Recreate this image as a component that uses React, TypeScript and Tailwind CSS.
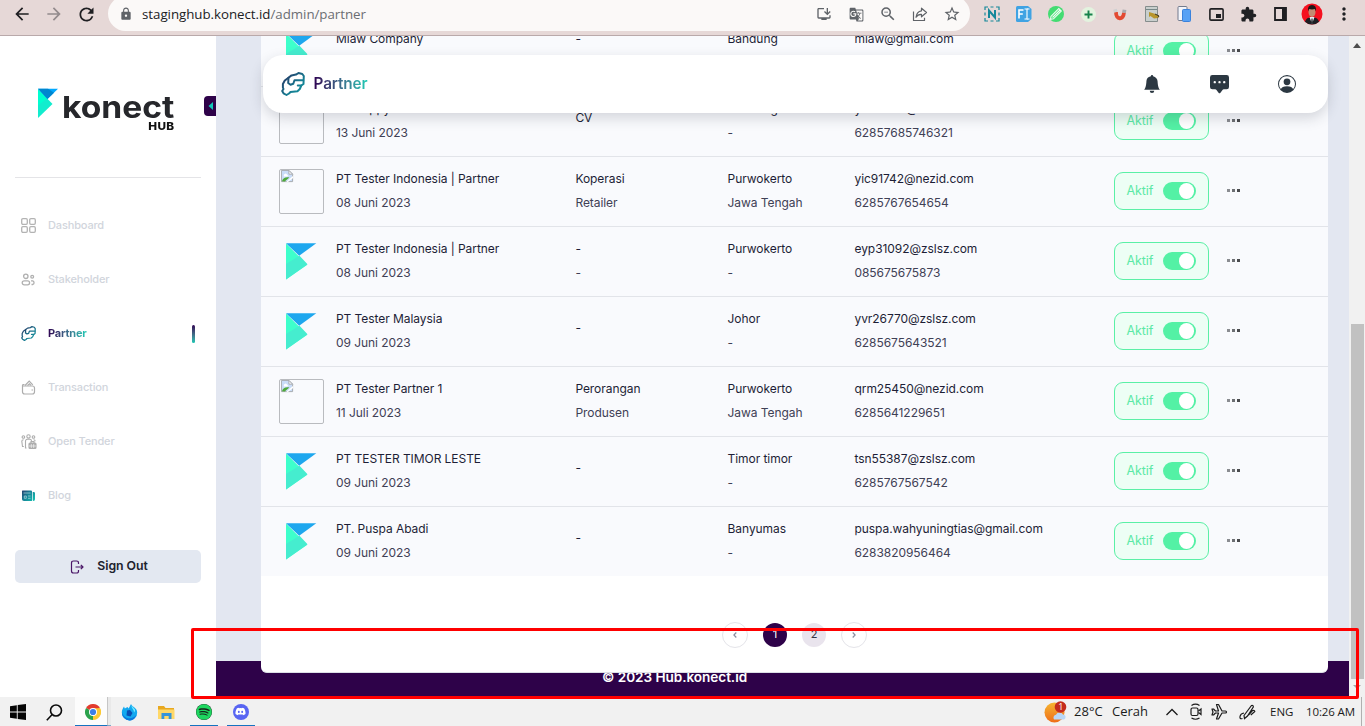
import React from "react";
import { BsBellFill, BsChatSquareDotsFill, BsPersonCircle } from "react-icons/bs";
import { FaDiscord, FaSpotify } from "react-icons/fa";
import {
  MdArrowBack, MdArrowForward, MdExtension, MdGTranslate, MdLock, MdMoreVert,
  MdOutlineInstallDesktop, MdRefresh, MdStarBorder, MdOutlineZoomOut,
} from "react-icons/md";

type Row = {
  broken?: boolean;
  name: string;
  date: string;
  kind: string[];
  place: string[];
  mail: string;
  phone: string;
};

const rows: Row[] = [
  { name: "Miaw Company", date: "13 Juni 2023", kind: ["-", "-"], place: ["Bandung", "-"], mail: "miaw@gmail.com", phone: "628576857463" },
  { broken: true, name: "PT Puppy Indah", date: "13 Juni 2023", kind: ["CV"], place: ["Bandung", "-"], mail: "yosabara@nezid.com", phone: "62857685746321" },
  { broken: true, name: "PT Tester Indonesia | Partner", date: "08 Juni 2023", kind: ["Koperasi", "Retailer"], place: ["Purwokerto", "Jawa Tengah"], mail: "yic91742@nezid.com", phone: "6285767654654" },
  { name: "PT Tester Indonesia | Partner", date: "08 Juni 2023", kind: ["-", "-"], place: ["Purwokerto", "-"], mail: "eyp31092@zslsz.com", phone: "085675675873" },
  { name: "PT Tester Malaysia", date: "09 Juni 2023", kind: ["-"], place: ["Johor", "-"], mail: "yvr26770@zslsz.com", phone: "6285675643521" },
  { broken: true, name: "PT Tester Partner 1", date: "11 Juli 2023", kind: ["Perorangan", "Produsen"], place: ["Purwokerto", "Jawa Tengah"], mail: "qrm25450@nezid.com", phone: "6285641229651" },
  { name: "PT TESTER TIMOR LESTE", date: "09 Juni 2023", kind: ["-"], place: ["Timor timor", "-"], mail: "tsn55387@zslsz.com", phone: "6285767567542" },
  { name: "PT. Puspa Abadi", date: "09 Juni 2023", kind: ["-"], place: ["Banyumas", "-"], mail: "puspa.wahyuningtias@gmail.com", phone: "6283820956464" },
];

function KMark() {
  return (
    <svg width="45" height="45" viewBox="0 0 45 45">
      <path d="M7 4.500v36l21.300-14.700z" fill="#3effcb" />
      <path d="M7 25 20.500 16.700l8 8.600L7 40.500z" fill="#45edcf" />
      <path d="M7 4.200h30.300L20.200 16.800z" fill="#1ea7ee" />
    </svg>
  );
}

function BrokenImage() {
  return (
    <div className="h-[45px] w-[45px] rounded-[2px] border border-[#b9bbbf]">
      <svg width="13" height="13" viewBox="0 0 14 14" className="ml-px">
        <path d="M.5.5h8l4 4v8H.5z" fill="#c9dcf8" stroke="#a4a7ac" />
        <path d="M8.500.5v4h4z" fill="#fff" stroke="#a4a7ac" />
        <path d="M3 5.500a1.800 1.800 0 0 1 3.400-.6A1.300 1.300 0 0 1 7 7H3z" fill="#fff" />
        <path d="M1 12c1-3 4-5 8-4l-5 4.500z" fill="#4fa93a" />
        <path d="M12.800 6.500 5.500 13h2L13 8.500z" fill="#fff" />
      </svg>
    </div>
  );
}

function Lines({ items, width }: { items: string[]; width: string }) {
  return (
    <div className={`flex h-12 flex-col justify-center leading-6 ${items.length === 1 ? "pb-[5px]" : ""} ${width}`}>
      {items.map((t, i) => (
        <span key={i} className={i === 0 ? "text-[#1d1e36]" : "text-[#3f4055]"}>{t}</span>
      ))}
    </div>
  );
}

function PartnerRow({ row, last }: { row: Row; last: boolean }) {
  return (
    <div className={`flex shrink-0 items-start bg-[#f9fafd] pl-[18px] text-[12px] tracking-[-0.060px] whitespace-nowrap ${last ? "h-[69px]" : "h-[70px] border-b border-[#e2e4e9]"}`}>
      <div className="mt-3 mr-3 h-[45px] w-[45px]">{row.broken ? <BrokenImage /> : <KMark />}</div>
      <div className="flex pt-[9.500px]">
        <Lines items={[row.name, row.date]} width="w-[239.400px]" />
        <Lines items={row.kind} width="w-[152.200px]" />
        <Lines items={row.place} width="w-[126.900px]" />
        <Lines items={[row.mail, row.phone]} width="w-[259.500px]" />
      </div>
      <div className="mt-[15px] flex h-[38px] w-[95px] items-center rounded-[9px] border border-[#5af0a6] bg-[#edfef5] pl-[11.500px]">
        <span className="w-[36.500px] text-[12.500px] text-[#5be9a6]">Aktif</span>
        <span className="flex h-[18px] w-[33px] items-center justify-end rounded-full bg-[#54f1a5] pr-[1.500px]">
          <span className="h-[15.500px] w-[15.500px] rounded-full bg-white" />
        </span>
      </div>
      <div className="mt-8 ml-[18px] flex gap-[2px]">
        <span className="h-[3px] w-[3px] bg-[#8a8c91]" />
        <span className="h-[3px] w-[3px] bg-[#6c6e72]" />
        <span className="h-[3px] w-[3px] bg-[#4a4b4e]" />
      </div>
    </div>
  );
}

function PartnerIcon({ size }: { size: number }) {
  const id = `partner-${size}`;
  return (
    <svg width={size} height={size} viewBox="0 0 24 24" fill="none" stroke={`url(#${id})`} strokeWidth="2" strokeLinejoin="round" strokeLinecap="round">
      <defs>
        <linearGradient id={id} x1="0" y1="0" x2="24" y2="24" gradientUnits="userSpaceOnUse">
          <stop stopColor="#2a2358" />
          <stop offset=".6" stopColor="#167c92" />
          <stop offset="1" stopColor="#129ba0" />
        </linearGradient>
      </defs>
      <path d="M7.500 5.700 3.800 8.500 1.900 12v3.500L2.500 17 1.200 19l1.300 2.300L5.500 23 8 21.500 9.500 20l7-.8 2.300-2.200 1.500-3.500L22.500 12l.3-8-1.500-2L17.500 1 15 2.600l-4.500.8z" />
      <path d="M7.500 5.700 7.200 11l2.300 1.700 2.800-1 1.200-3.500h8.700M20.300 13.500h-3.500" />
    </svg>
  );
}

function GridIcon() {
  return (
    <svg width="15" height="15" viewBox="0 0 15 15" fill="none" stroke="#b3b3b3" strokeWidth="1.300">
      <rect x=".7" y=".7" width="5.600" height="5.600" rx="1.200" />
      <rect x="8.700" y=".7" width="5.600" height="5.600" rx="1.200" />
      <rect x=".7" y="8.700" width="5.600" height="5.600" rx="1.200" />
      <rect x="8.700" y="8.700" width="5.600" height="5.600" rx="1.200" />
    </svg>
  );
}

function PeopleIcon() {
  return (
    <svg width="15" height="15" viewBox="0 0 15 15" fill="none" stroke="#b0b0b0" strokeWidth="1.300">
      <circle cx="4.800" cy="4.300" r="2.200" />
      <circle cx="11.200" cy="4.800" r="1.400" />
      <rect x="1.200" y="8.800" width="7.400" height="4" rx="2" />
      <path d="M10 8.800h1.800a2 2 0 0 1 0 3.700H10.500" />
    </svg>
  );
}

function WalletIcon() {
  return (
    <svg width="15" height="15" viewBox="0 0 15 15" fill="none" stroke="#adadad" strokeWidth="1.200">
      <path d="M1.500 5.500v6.300a2.200 2.200 0 0 0 2.200 2.200h7.600a2.200 2.200 0 0 0 2.200-2.200V8a2 2 0 0 0-2-2H2.500C1 6 1.300 4.500 2.500 4.500h1" />
      <path d="m4 5.500 4.200-4.300 3.600 3.600M6.500 5.500 8.500 3.800l1.500 1.500M10.500 10h1.500" />
    </svg>
  );
}

function TenderIcon() {
  return (
    <svg width="16" height="16" viewBox="0 0 16 16" fill="none" stroke="#adadad" strokeWidth="1.100">
      <circle cx="7.500" cy="2.400" r="1.700" />
      <circle cx="2.400" cy="3" r="1.300" />
      <circle cx="12.500" cy="3" r="1.300" />
      <path d="M5.500 14h-1V7a1.700 1.700 0 0 1 1.700-1.700h2.600A1.700 1.700 0 0 1 10.500 7M2.800 12.500H1.500L.8 7.300Q.8 5.800 2.600 5.800M12.500 5.800q1.700 0 1.700 1.500" />
      <rect x="8" y="9" width="7" height="5.500" rx="1" fill="#adadad" />
      <path d="M10 9V7.500h3V9" />
      <path d="M8 12h7M10.300 10v4M12.700 10v4" stroke="#fff" strokeWidth=".6" />
    </svg>
  );
}

function BlogIcon() {
  return (
    <svg width="15" height="15" viewBox="0 0 15 15">
      <defs>
        <linearGradient id="blog" x1="0" y1="0" x2="14" y2="12" gradientUnits="userSpaceOnUse">
          <stop stopColor="#2b2a62" /><stop offset=".5" stopColor="#177f95" /><stop offset="1" stopColor="#16c2b2" />
        </linearGradient>
      </defs>
      <path d="M1.500 2.500H10q1 0 1 1v9.500H3q-2 0-2-1.800V3q0-.5.500-.5zM11.700 4h1q1.300 0 1.300 1.300v6q0 1.700-1.500 1.700-.8 0-.8-1z" fill="url(#blog)" />
      <path d="M2.500 5h7M7 8h2.500M7 10.300h2.500M3.300 8h2v2.300h-2z" stroke="#b5dbe2" strokeWidth=".7" fill="none" />
    </svg>
  );
}

const gradientText = "bg-gradient-to-r from-[#2e0052] via-[#3a6c8b] to-[#14cdb5] bg-clip-text text-transparent";

function Sidebar() {
  const items = [
    { label: "Dashboard", icon: <GridIcon /> },
    { label: "Stakeholder", icon: <PeopleIcon /> },
    { label: "Partner", icon: <PartnerIcon size={15} />, active: true },
    { label: "Transaction", icon: <WalletIcon /> },
    { label: "Open Tender", icon: <TenderIcon /> },
    { label: "Blog", icon: <BlogIcon /> },
  ];
  return (
    <aside className="relative flex w-[216px] shrink-0 flex-col bg-white px-[15px] pt-[52px]">
      <div className="flex h-[90px] pl-[22px]">
        <svg width="22" height="30" viewBox="0 0 22 30">
          <path d="M1 1v29l14.500-14z" fill="#12edce" />
          <path d="M1 1v16.500l9.500-7.500z" fill="#00ffd0" />
          <path d="M1 .7h20L10.500 11z" fill="#00a8ff" />
          <path d="M1 .7h10l6 4L10.500 11z" fill="#0086cf" />
        </svg>
        <div className="flex w-[115.500px] flex-col items-end pt-[4px] pl-[3px] leading-none">
          <span className="origin-right scale-x-[1.120] text-[30px] leading-[30px] font-bold text-[#26272b]">konect</span>
          <span className="-mt-px origin-right scale-x-[1.070] text-[11px] leading-[11px] font-extrabold tracking-[0.300px] text-[#111]">HUB</span>
        </div>
      </div>
      <div className="absolute top-[60px] right-0 flex h-5 w-3 items-center justify-center rounded-l-[4px] bg-[#2e0249]">
        <svg width="5" height="8" viewBox="0 0 5 8"><path d="M5 0v8L.5 4z" fill="#12c8b8" /></svg>
      </div>
      <div className="mt-[-1px] h-px w-[186px] bg-[#e4e4e7]" />
      <nav className="mt-[21px] flex flex-col">
        {items.map((it) => (
          <div key={it.label} className="flex h-[54px] items-center pl-[6px]">
            <span className="-mt-px flex w-[27px]">{it.icon}</span>
            <span className={`-mt-[2px] text-[11px] ${it.active ? "font-bold tracking-[-0.200px] " + gradientText : "font-medium tracking-[-0.150px] text-[#d1d5dc]"}`}>{it.label}</span>
            {it.active && <span className="mr-[6px] ml-auto h-[18px] w-[3px] rounded-full bg-gradient-to-b from-[#2e0052] to-[#12c8b4]" />}
          </div>
        ))}
      </nav>
      <button className="mt-[27px] flex h-[33px] w-[186px] items-center justify-center gap-[13px] rounded-[5px] bg-[#e3e8f1] pl-[2px] text-[12.300px] font-semibold tracking-[-0.050px] text-[#20222e]">
        <svg width="14" height="14" viewBox="0 0 14 14" fill="none" stroke="#4b1768" strokeWidth="1.200" strokeLinejoin="round">
          <path d="M8.500 4V2.800Q8.500 1 6.500 1h-3q-2 0-2 2v8q0 2 2 2h3q2 0 2-1.800V10M5.500 7h7M10.800 4.800 13 7l-2.200 2.200" />
        </svg>
        Sign Out
      </button>
    </aside>
  );
}

function Pagination() {
  const arrow = "flex h-[26px] w-[26px] items-center justify-center rounded-full border border-[#e4e4e9]";
  const page = "flex h-6 w-6 items-center justify-center rounded-full pb-[2px] text-[11px]";
  return (
    <div className="mt-[46px] flex items-center justify-center gap-[15px]">
      <span className={arrow}><svg width="4" height="6" viewBox="0 0 4 6" fill="none" stroke="#8b8da0" strokeWidth="1.200"><path d="M3.300.5.900 3l2.400 2.500" /></svg></span>
      <span className={`${page} bg-[#2e0249] text-white`}>1</span>
      <span className={`${page} bg-[#e9e4ed] text-[#343545]`}>2</span>
      <span className={arrow}><svg width="4" height="6" viewBox="0 0 4 6" fill="none" stroke="#8b8da0" strokeWidth="1.200"><path d="M.7.5 3.100 3 .7 5.500" /></svg></span>
    </div>
  );
}

function Cell({ children }: { children: React.ReactNode }) {
  return <span className="flex h-full w-8 shrink-0 items-center justify-center">{children}</span>;
}

function BrowserBar() {
  return (
    <header className="flex h-9 shrink-0 items-start overflow-hidden border-b border-[#b9a9aa] bg-[#e6d8d7] text-[#5f6368]">
      <div className="flex h-7 w-[108px] shrink-0 items-center pl-[6px] text-[#1f1f22]">
        <Cell><MdArrowBack size={20} /></Cell>
        <Cell><MdArrowForward size={20} className="text-[#938b8d]" /></Cell>
        <Cell><MdRefresh size={21} /></Cell>
      </div>
      <div className="-mt-1 flex h-[35px] w-[862px] shrink-0 items-center rounded-full bg-[#fbf9f8] pt-px pl-[11px]">
        <MdLock size={14} className="mr-[9px]" />
        <span className="pt-[2px] font-['Open_Sans',sans-serif] text-[13.300px] tracking-[-0.030px] text-[#202124]">
          staginghub.konect.id<span className="text-[#6b6e73]">/admin/partner</span>
        </span>
        <span className="mr-[2px] ml-auto flex h-full">
          <Cell><MdOutlineInstallDesktop size={16} /></Cell>
          <Cell><MdGTranslate size={15} /></Cell>
          <Cell><MdOutlineZoomOut size={18} /></Cell>
          <Cell>
            <svg width="16" height="15" viewBox="0 0 16 15" fill="none" stroke="#5f6368" strokeWidth="1.200" strokeLinejoin="round">
              <path d="M1.500 4.500v9h11v-2.700M9.500 1.200l5 4.300-5 4.300V7.300Q6 7 4 10.300 4.600 4.500 9.500 3.800z" />
            </svg>
          </Cell>
          <Cell><MdStarBorder size={18} /></Cell>
        </span>
      </div>
      <div className="ml-[6px] flex h-7 text-[#202124]">
        <Cell>
          <svg width="16" height="16" viewBox="0 0 16 16" fill="none" stroke="#15889a" strokeWidth="1.500">
            <path d="M1 4V1h3M12 1h3v3M15 12v3h-3M4 15H1v-3M1 6.500v3M15 6.500v3M6.500 1h3M6.500 15h3" strokeWidth="1.200" />
            <path d="M5 12V4.500l6 7V4" strokeWidth="2" />
          </svg>
        </Cell>
        <Cell>
          <svg width="16" height="16" viewBox="0 0 16 16" fill="none" stroke="#fff">
            <path d="M1.500 0H12l3.500 3v10L12 16H1.500Q0 16 0 14.500v-13Q0 0 1.500 0z" fill="#40a3e3" stroke="none" />
            <path d="M3 12.500V4h4.500M3 8h3.800" strokeWidth="1.600" /><path d="M8.500 3h2l1-.3 1 .3h1M8.500 13h2l1 .3 1-.3h1M11 3v10" strokeWidth="1.100" />
          </svg>
        </Cell>
        <Cell>
          <svg width="16" height="16" viewBox="0 0 16 16"><circle cx="8" cy="8" r="8" fill="#44dc72" /><path d="m3 10.300 7.800-7.800 2.500 2.500-7.800 7.800-3 .6zM4.500 11.500l7.500-7.500" fill="none" stroke="#eefdf2" strokeWidth="1.100" /></svg>
        </Cell>
        <Cell>
          <svg width="15" height="15" viewBox="0 0 15 15"><circle cx="7.500" cy="7.500" r="7.500" fill="#e3f3df" /><path d="M7.500 3.500v8M3.500 7.500h8" stroke="#15824b" strokeWidth="1.900" /></svg>
        </Cell>
        <Cell>
          <svg width="14" height="14" viewBox="0 0 14 14" fill="none" strokeWidth="3.800"><path d="M3 5C2.800 13 10.500 13.500 11 5.500" stroke="#e34a32" /><path d="m2 2.300.8 2.900" stroke="#cfd0d2" /><path d="m11.500 2.700-.5 3" stroke="#a8aaae" /></svg>
        </Cell>
        <Cell>
          <svg width="16" height="16" viewBox="0 0 16 16"><path d="M1.500.5h12v15h-12z" fill="#c9cfcd" stroke="#858d8c" /><path d="M2 3.500h11" stroke="#788" /><path d="m5 6 5 1.500 5 2-1 2.500-4 .5L6.500 10 5 11z" fill="#b8952c" /><path d="m11 8 4 2-1 1.500" stroke="#3c3522" fill="none" /></svg>
        </Cell>
        <Cell>
          <svg width="14" height="16" viewBox="0 0 14 16"><rect x="1" y=".5" width="9" height="14" rx="1" fill="#f3f5fb" stroke="#727b8e" /><rect x="5.500" y="3.500" width="8" height="12" rx="1" fill="#57a1f5" stroke="#3a82dc" /></svg>
        </Cell>
        <Cell>
          <svg width="15" height="13" viewBox="0 0 15 13"><rect x=".9" y=".9" width="13.200" height="11.200" rx="1.200" fill="none" stroke="#1f1f22" strokeWidth="1.600" /><path d="M7 6h5v4H7z" fill="#1f1f22" /></svg>
        </Cell>
        <Cell><MdExtension size={17} /></Cell>
        <Cell>
          <svg width="13" height="14" viewBox="0 0 13 14"><path d="M1 1h11v12H1z" fill="none" stroke="#1f1f22" strokeWidth="1.800" /><path d="M8 1h4v12H8z" fill="#1f1f22" /></svg>
        </Cell>
        <Cell>
          <svg width="22" height="22" viewBox="0 0 22 22">
            <defs><clipPath id="avatar"><circle cx="11" cy="11" r="10.500" /></clipPath></defs>
            <g clipPath="url(#avatar)">
              <path d="M0 0h22v22H0z" fill="#f5101f" />
              <path d="M3.500 22q0-6.500 5-7.500h5q5 1 5 7.500z" fill="#1d1f24" />
              <path d="m8.500 14 2.500 7 2.500-7z" fill="#e9edf0" />
              <path d="m10.500 15.500-.5 5h2l-.5-5z" fill="#22252a" />
              <ellipse cx="11" cy="9" rx="3.500" ry="5" fill="#c48c72" />
              <path d="M7.200 8.500Q6 2 11 2t3.800 6.500l-.8-2.500q-3 .8-6 0z" fill="#1b1617" />
            </g>
          </svg>
        </Cell>
        <Cell><MdMoreVert size={20} /></Cell>
      </div>
    </header>
  );
}

function TaskIcon({ width, open, children }: { width: string; open?: boolean; children: React.ReactNode }) {
  return (
    <span className={`flex h-full shrink-0 items-center justify-center ${width}`}>
      <span className={`flex h-full w-[28px] items-center justify-center pt-px ${open ? "border-b border-[#1673c0]" : ""}`}>{children}</span>
    </span>
  );
}

function Taskbar() {
  return (
    <footer className="flex h-[29px] shrink-0 items-center bg-[#f1f1f1] font-['Open_Sans',sans-serif] text-[#1b1b1b]">
      <TaskIcon width="w-[36px]">
        <svg width="16" height="16" viewBox="0 0 16 16"><path d="M0 2.200 6.800 1.300V7.500H0zM7.700 1.100 16 0v7.500H7.700zM0 8.500h6.800v6.300L0 13.800zM7.700 8.500H16V16l-8.300-1.100z" fill="#050505" /></svg>
      </TaskIcon>
      <TaskIcon width="w-[36px]">
        <svg width="17" height="17" viewBox="0 0 17 17" fill="none" stroke="#0a0a0a" strokeWidth="1.600"><circle cx="10" cy="6.500" r="5.500" /><path d="m6.200 10.500-5.400 5.700" /></svg>
      </TaskIcon>
      <span className="ml-[3px] flex h-full w-[33px] items-center justify-center border-r border-b border-r-[#c6c6c6] border-b-[#1673c0] bg-[#fcfcfc] pt-px pl-1">
        <svg width="16" height="16" viewBox="0 0 16 16">
          <path d="M8 8 1.070 4A8 8 0 0 1 14.930 4z" fill="#e33b2e" />
          <path d="M8 8 8 16A8 8 0 0 1 1.070 4z" fill="#2ba24c" />
          <path d="M8 8h-.1L14.930 4A8 8 0 0 1 8 16z" fill="#fcc934" />
          <path d="M8 4.200h7a8 8 0 0 1-.4 8L8 12z" fill="#fcc934" />
          <circle cx="8" cy="8" r="4" fill="#fff" /><circle cx="8" cy="8" r="3.100" fill="#3b7fe8" />
        </svg>
      </span>
      <span className="h-full w-[3px] border-b border-[#7ba9cc] bg-[#e9e9e9]" />
      <TaskIcon width="w-[37px]">
        <svg width="17" height="17" viewBox="0 0 17 17">
          <path d="M8.500 16.500A7.800 7.800 0 0 1 .8 8.500C.8 6 2 4 3 2.500l.8 2L6.500 3l1.200 1.500L10 0c1 3 6.200 3.500 6.200 8.500a7.800 7.800 0 0 1-7.700 8z" fill="#12a9f0" />
          <path d="M1 8c2 8 11 8 14.500 2.500C14 15 11.500 16.500 8.500 16.500A7.800 7.800 0 0 1 1 8z" fill="#0b78dc" />
          <path d="M6 6.500 9 6l2.500 3-2 3.500-4-1z" fill="#0a4fb4" /><path d="M10.500 1.500c0 3 2.700 4 2.500 7 1-1 1.200-2 1-3z" fill="#74eaff" />
        </svg>
      </TaskIcon>
      <TaskIcon width="w-[37px]">
        <svg width="17" height="15" viewBox="0 0 17 15"><path d="M0 1h6l1.500 2H16v11H0z" fill="#e8a820" /><path d="M0 4.500h16.500V14H0z" fill="#ffd868" /><path d="M3.500 14V8h10v6h-2.800v-3H6.300v3z" fill="#3594db" /></svg>
      </TaskIcon>
      <TaskIcon width="w-[37px]" open>
        <span className="flex rounded-full bg-[#17251b]"><FaSpotify size={16} color="#1ed760" /></span>
      </TaskIcon>
      <TaskIcon width="w-[37px]" open>
        <span className="flex h-4 w-4 items-center justify-center rounded-full bg-[#5865f2]"><FaDiscord size={11} color="#fff" /></span>
      </TaskIcon>
      <div className="mr-[3px] ml-auto flex h-full items-center border-r border-[#b0b0b0] pr-[6px]">
        <svg width="23" height="22" viewBox="0 0 23 22">
          <defs><linearGradient id="sun" x1="0" y1="0" x2="0" y2="1"><stop stopColor="#f6b531" /><stop offset="1" stopColor="#ee6d18" /></linearGradient></defs>
          <circle cx="10.500" cy="11.500" r="10" fill="url(#sun)" />
          <path d="M10 18.500a3 3 0 0 1 2-4.700 4 4 0 0 1 7-.3 2.600 2.600 0 0 1 1 5z" fill="#b9d6f5" />
          <circle cx="16.500" cy="6" r="5.800" fill="#c42b1c" />
          <text x="14.300" y="9.300" fontSize="9" fill="#fff">1</text>
        </svg>
        <span className="ml-[7px] w-[38px] text-[13px]">28°C</span>
        <span className="w-[53px] text-[13px]">Cerah</span>
        <svg width="14" height="8" viewBox="0 0 14 8" fill="none" stroke="#1b1b1b" strokeWidth="1.300"><path d="m1.500 7 5.500-5.500L12.500 7" /></svg>
        <svg className="ml-[11px]" width="12" height="17" viewBox="0 0 12 17" fill="none" stroke="#1b1b1b" strokeWidth="1.200"><rect x="1" y="5" width="7" height="7.500" rx="1.500" /><path d="m8.500 8 2.500-2v5.500l-2.500-2M1.500 2.500Q5.500-.2 9.500 2.500M1.500 15q4 2.500 8 0" /></svg>
        <svg className="ml-[9px]" width="17" height="17" viewBox="0 0 17 17" fill="none" stroke="#1b1b1b" strokeWidth="1.200" strokeLinejoin="round"><path d="M1 6h1.500l2 2h3L5.500 1.500h2L11 8h3.500a1 1 0 0 1 0 2H11l-3.500 6h-2l2-6h-3l-2 2H1l1-3z" /></svg>
        <svg className="ml-[11px]" width="17" height="16" viewBox="0 0 17 16" fill="none" stroke="#1b1b1b" strokeWidth="1.200"><path d="M5 11.500 12.500 1.500q2-.5 1.800 1.500L8.500 12l-3 2.500zM5 9Q1.500 9.500 1 12.500t2.500 2M9.500 11l4-4.500q2-.5 2.300 1l-4 3.500" /></svg>
        <span className="ml-[14px] w-[36px] text-[11.500px]">ENG</span>
        <span className="text-[11.500px] tracking-[-0.120px]">10:26 AM</span>
      </div>
    </footer>
  );
}

export default function App() {
  return (
    <div className="relative flex h-[726px] w-[1365px] flex-col overflow-hidden bg-white font-['Inter',sans-serif]">
      <BrowserBar />
      <div className="flex h-[661px] shrink-0 overflow-hidden">
        <Sidebar />
        <main className="relative flex w-[1133px] flex-col">
          <div className="relative z-10 flex h-[625px] shrink-0 flex-col bg-[#e3e7f1] pr-[21px] pl-[45px]">
            <div className="-mt-[19px] flex h-[656px] shrink-0 flex-col rounded-b-[6px] border-b border-[#dcdfe6] bg-white">
              {rows.map((r, i) => <PartnerRow key={i} row={r} last={i === rows.length - 1} />)}
              <Pagination />
            </div>
          </div>
          <div className="flex h-9 shrink-0 items-center bg-[#2e0249] pl-[386px] text-[13.600px] font-semibold text-white">
            <span className="-mt-[3px] tracking-[-0.060px]">© 2023 Hub.konect.id</span>
          </div>
          <div className="absolute top-[19px] left-[47px] z-20 flex h-[58px] w-[1065px] items-center rounded-[20px] bg-white px-[18px] shadow-[0_5px_14px_rgba(40,45,60,0.18)]">
            <PartnerIcon size={24} />
            <span className={`mt-px ml-[8.500px] text-[15.300px] font-semibold tracking-[-0.100px] ${gradientText}`}>Partner</span>
            <div className="mr-[14px] ml-auto flex items-center text-[#2c3842]">
              <BsBellFill size={18} />
              <BsChatSquareDotsFill size={19} className="ml-[49px]" />
              <BsPersonCircle size={18} className="ml-[49px]" />
            </div>
          </div>
        </main>
        <div className="flex w-4 flex-col items-center bg-[#f1f1f1] pt-[7px] pb-[8px]">
          <svg width="8" height="5" viewBox="0 0 8 5"><path d="M4 0 8 5H0z" fill="#4d4d4d" /></svg>
          <div className="mt-[276px] ml-[2px] h-[356px] w-[13px] self-start bg-[#c1c1c1]" />
          <svg className="mt-[6px]" width="8" height="4" viewBox="0 0 8 4"><path d="M0 0h8L4 4z" fill="#a5a5a5" /></svg>
        </div>
      </div>
      <Taskbar />
      <div className="pointer-events-none absolute top-[628px] left-[191px] z-30 h-[71px] w-[1168px] rounded-[2px] border-3 border-[#ff0000]" />
    </div>
  );
}
